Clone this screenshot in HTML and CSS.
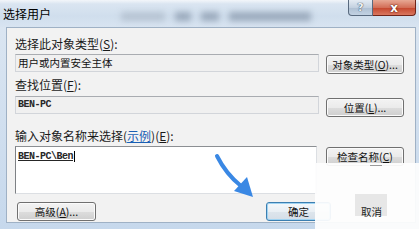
FILE: index.html
```html
<!DOCTYPE html>
<html>
<head>
<meta charset="utf-8">
<link rel="stylesheet" href="styles.css">
</head>
<body>
<div class="window">
  <div class="titlebar">
    <span class="title">选择用户</span>
    <div class="ghost"><i class="g1"></i><i class="g2"></i><i class="g3"></i><i class="g4"></i></div>
    <div class="caption"><span class="cbtn help">?</span><span class="cbtn close">x</span></div>
  </div>
  <div class="panel">
    <div class="lbl">选择此对象类型(<u>S</u>):</div>
    <div class="row r1">
      <div class="field">用户或内置安全主体</div>
      <button class="btn">对象类型(<u>O</u>)...</button>
    </div>
    <div class="lbl l2">查找位置(<u>F</u>):</div>
    <div class="row r2">
      <div class="field mono">BEN-PC</div>
      <button class="btn b2">位置(<u>L</u>)...</button>
    </div>
    <div class="lbl l3">输入对象名称来选择(<span class="link">示例</span>)(<u>E</u>):</div>
    <div class="row r3">
      <div class="area"><span class="mono uline">BEN-PC\Ben</span><span class="caret"></span></div>
      <button class="btn b3">检查名称(<u>C</u>)</button>
    </div>
    <div class="actions">
      <button class="btn adv">高级(<u>A</u>)...</button>
      <button class="btn ok">确定</button>
      <button class="btn cancel">取消</button>
    </div>
  </div>
  <svg class="arrow" width="419" height="229" viewBox="0 0 419 229">
    <path d="M217 156 Q226 174 241 186" fill="none" stroke="#3a88e4" stroke-width="4" stroke-linecap="round"/>
    <polygon points="253,197 234,191 247,177" fill="#3a88e4"/>
  </svg>
  <div class="watermark"><i class="wm-patch"></i><i class="wm-line"></i></div>
</div>
</body>
</html>
```
FILE: styles.css
```css
html, body {
  margin: 0;
  padding: 0;
}
body {
  width: 419px;
  height: 229px;
  overflow: hidden;
  font-family: "Noto Sans CJK SC", "Noto Sans", sans-serif;
  color: #111;
}
.window {
  position: relative;
  width: 419px;
  height: 229px;
  display: flex;
  flex-direction: column;
  background: linear-gradient(#dde7f2, #c6d8ec);
  overflow: hidden;
}
.titlebar {
  height: 27px;
  flex: none;
  display: flex;
  align-items: flex-start;
  background: linear-gradient(#f3f6fa 0, #dae5f1 4px, #d0deed 60%, #d8e4f1 100%);
}
.title {
  font-size: 12px;
  line-height: 14px;
  margin: 7px 0 0 3px;
  color: #000;
}
.ghost {
  display: flex;
  align-items: center;
  height: 12px;
  margin: 10px 0 0 70px;
  gap: 10px;
}
.ghost i {
  display: block;
  height: 9px;
  background: #8898ac;
  filter: blur(3px);
  opacity: 0.75;
}
.ghost .g1 { width: 44px; background: #aebbca; }
.ghost .g2 { width: 16px; }
.ghost .g3 { width: 18px; }
.ghost .g4 { width: 82px; }
.caption {
  display: flex;
  margin-left: auto;
  margin-right: 3px;
}
.cbtn {
  height: 16px;
  box-sizing: border-box;
  display: flex;
  align-items: center;
  justify-content: center;
  font-family: "DejaVu Sans", sans-serif;
  font-weight: bold;
  color: #fff;
}
.help {
  width: 25px;
  border: 1px solid #596a7f;
  border-top: none;
  border-radius: 0 0 0 4px;
  background: linear-gradient(#e4ebf3, #c3d1e0 50%, #aebfd2 51%, #c2d2e3);
  font-size: 11px;
  color: #eef2f6;
  text-shadow: 0 0 1px #34465c, 0 0 1px #34465c;
}
.close {
  width: 43px;
  border: 1px solid #6f2419;
  border-left: none;
  border-top: none;
  border-radius: 0 0 4px 0;
  background: linear-gradient(#e7a894, #d36f58 50%, #c4452c 51%, #d9775f);
  font-size: 12px;
  text-shadow: 0 0 2px #5a1a10, 0 0 1px #5a1a10;
}
.panel {
  flex: 1;
  margin: 0 3px 6px 6px;
  border: 1px solid #9fb1c5;
  background: #f2f2f2;
  padding: 9px 11px 0 8px;
  display: flex;
  flex-direction: column;
}
.lbl {
  font-size: 12px;
  line-height: 14px;
  height: 14px;
  white-space: nowrap;
  color: #1a1a1a;
}
.lbl u, .btn u {
  text-decoration: underline;
  text-underline-offset: 1px;
}
.l2 { margin-top: 4px; }
.l3 { margin-top: 12px; }
.link {
  color: #1a5fb4;
  text-decoration: underline;
}
.row {
  display: flex;
  align-items: flex-start;
  gap: 7px;
}
.r1 { margin-top: 3px; }
.r2 { margin-top: 4px; }
.r3 { margin-top: 3px; gap: 9px; }
.field {
  width: 304px;
  height: 18px;
  box-sizing: border-box;
  border: 1px solid #d2d5da;
  border-top-color: #a9acb1;
  background: #f0f0f0;
  padding-left: 2px;
  font-size: 10.5px;
  line-height: 16px;
  white-space: nowrap;
}
.mono {
  font-family: "Liberation Mono", monospace;
  font-size: 10px;
  font-weight: bold;
  letter-spacing: -0.5px;
  color: #262626;
}
.area {
  width: 302px;
  height: 48px;
  box-sizing: border-box;
  border: 1px solid #dcdfe3;
  border-top-color: #8c8f93;
  border-left-color: #7e8185;
  background: #fff;
  padding: 3px 0 0 2px;
  line-height: 14px;
  display: flex;
  align-items: flex-start;
}
.uline {
  text-decoration: underline;
  text-underline-offset: 1px;
}
.caret {
  display: block;
  width: 1px;
  height: 11px;
  margin-top: 1px;
  margin-left: 1px;
  background: #000;
}
.btn {
  width: 78px;
  height: 19px;
  box-sizing: border-box;
  padding: 0;
  margin: 0;
  border: 1px solid #707070;
  border-radius: 3px;
  background: linear-gradient(#f3f3f3, #ebebeb 50%, #dddddd 51%, #cfcfcf);
  box-shadow: inset 0 0 0 1px #fbfbfb;
  font-family: "Noto Sans CJK SC", sans-serif;
  font-size: 10.5px;
  line-height: 16px;
  color: #111;
  white-space: nowrap;
}
.r1 .btn { margin-top: 1px; }
.b2 { margin-top: 2px; }
.b3 { margin-top: 1px; }
.actions {
  display: flex;
  margin-top: 8px;
  align-items: flex-start;
}
.adv {
  width: 79px;
  margin-left: 2px;
}
.ok {
  width: 65px;
  margin-left: 170px;
  border-color: #3c7fb1;
  background: linear-gradient(#f4f8fb, #e9eff4 50%, #dde5ec 51%, #d5dee7);
  box-shadow: inset 0 0 0 1px #9fd3f2;
}
.cancel {
  width: 65px;
  margin-left: 8px;
  position: relative;
  z-index: 3;
  border-color: transparent;
  background: none;
  box-shadow: none;
  color: #222;
}
.arrow {
  position: absolute;
  left: 0;
  top: 0;
  pointer-events: none;
  z-index: 4;
}
.watermark {
  position: absolute;
  left: 315px;
  top: 163px;
  width: 104px;
  height: 66px;
  background: rgba(253, 253, 253, 0.94);
  z-index: 2;
}
.wm-patch {
  position: absolute;
  left: 40px;
  top: 31px;
  width: 32px;
  height: 22px;
  background: rgba(205, 205, 205, 0.45);
}
.wm-line {
  position: absolute;
  left: 55px;
  top: 2px;
  width: 12px;
  height: 1px;
  background: #9a9a9a;
}
```
